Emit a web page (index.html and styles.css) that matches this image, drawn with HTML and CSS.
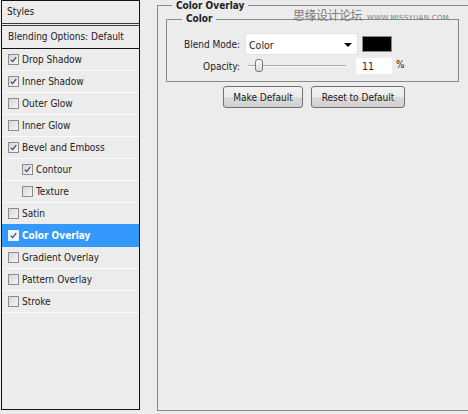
FILE: index.html
```html
<!DOCTYPE html>
<html lang="en">
<head>
    <meta charset="UTF-8">
    <title>Layer Style - Color Overlay</title>
    <link rel="stylesheet" href="styles.css">
</head>
<body>
    <div class="styles-panel">
        <div class="panel-title">Styles</div>
        <div class="panel-blending">Blending Options: Default</div>
        <ul class="style-list">
            <li><span class="check on"><svg viewBox="0 0 11 11"><path d="M2.2 5.6 L4.4 8 L8.8 2.6"/></svg></span>Drop Shadow</li>
            <li><span class="check on"><svg viewBox="0 0 11 11"><path d="M2.2 5.6 L4.4 8 L8.8 2.6"/></svg></span>Inner Shadow</li>
            <li><span class="check"></span>Outer Glow</li>
            <li><span class="check"></span>Inner Glow</li>
            <li><span class="check on"><svg viewBox="0 0 11 11"><path d="M2.2 5.6 L4.4 8 L8.8 2.6"/></svg></span>Bevel and Emboss</li>
            <li class="sub"><span class="check on"><svg viewBox="0 0 11 11"><path d="M2.2 5.6 L4.4 8 L8.8 2.6"/></svg></span>Contour</li>
            <li class="sub"><span class="check"></span>Texture</li>
            <li><span class="check"></span>Satin</li>
            <li class="active"><span class="check on"><svg viewBox="0 0 11 11"><path d="M2.2 5.6 L4.4 8 L8.8 2.6"/></svg></span>Color Overlay</li>
            <li><span class="check"></span>Gradient Overlay</li>
            <li><span class="check"></span>Pattern Overlay</li>
            <li><span class="check"></span>Stroke</li>
        </ul>
    </div>

    <fieldset class="overlay-group">
        <legend>Color Overlay</legend>
        <fieldset class="color-group">
            <legend>Color</legend>
            <div class="form-row">
                <label class="row-label">Blend Mode:</label>
                <div class="select-box">Color<span class="arrow"></span></div>
                <span class="swatch"></span>
            </div>
            <div class="form-row opacity-row">
                <label class="row-label">Opacity:</label>
                <div class="slider"><span class="thumb"></span></div>
                <div class="num-input">11</div>
                <span class="unit">%</span>
            </div>
        </fieldset>
        <div class="button-row">
            <button>Make Default</button>
            <button class="wide">Reset to Default</button>
        </div>
    </fieldset>

    <div class="watermark">思缘设计论坛<span>www.MISSYUAN.COM</span></div>
</body>
</html>
```

FILE: styles.css
```css
body {
    margin: 0;
    background-color: #ececec;
    font-family: "DejaVu Sans Condensed", "DejaVu Sans", sans-serif;
    font-size: 10px;
    color: #222;
    display: flex;
    align-items: flex-start;
    overflow: hidden;
    height: 414px;
}
.styles-panel {
    box-sizing: border-box;
    width: 139px;
    height: 410px;
    margin-left: 1px;
    border: 1px solid #141414;
    flex-shrink: 0;
}
.panel-title {
    height: 22px;
    line-height: 22px;
    padding-left: 5px;
    border-bottom: 3px double #3a3a3a;
}
.panel-blending {
    height: 22px;
    line-height: 22px;
    padding-left: 6px;
    border-bottom: 1px solid #141414;
}
.style-list {
    list-style: none;
    margin: 0;
    padding: 0;
}
.style-list li {
    display: flex;
    align-items: center;
    height: 21px;
    padding-left: 6px;
    border-bottom: 1px solid #fafafa;
}
.style-list li.sub {
    padding-left: 20px;
}
.style-list li.active {
    background-color: #3399fd;
    color: #fff;
    font-weight: bold;
    border-bottom-color: #3399fd;
    margin-top: -1px;
    height: 22px;
}
.check {
    box-sizing: border-box;
    width: 11px;
    height: 11px;
    margin-right: 3px;
    border: 1px solid #8c8c8c;
    background: linear-gradient(135deg, #d6d6d6, #f6f6f6);
    display: flex;
}
.check svg {
    width: 9px;
    height: 9px;
}
.check path {
    fill: none;
    stroke: #2f4577;
    stroke-width: 1.5;
}
.active .check {
    border-color: #e8eefa;
    background: #f4f6fb;
}

.overlay-group {
    box-sizing: border-box;
    margin: 0 0 0 17px;
    padding: 0;
    width: 330px;
    height: 411px;
    border: 1px solid #8a8a8a;
    flex-shrink: 0;
}
.overlay-group > legend {
    margin-left: 14px;
    padding: 0 4px;
    font-weight: bold;
    line-height: 11px;
}
.color-group {
    box-sizing: border-box;
    margin: 2px 0 0 8px;
    padding: 0;
    width: 293px;
    height: 69px;
    border: 1px solid #8a8a8a;
}
.color-group > legend {
    margin-left: 15px;
    padding: 0 4px;
    font-weight: bold;
    line-height: 12px;
}
.form-row {
    display: flex;
    align-items: center;
    margin-top: 8px;
}
.opacity-row {
    margin-top: 3px;
    height: 16px;
}
.row-label {
    width: 73px;
    text-align: right;
}
.select-box {
    box-sizing: border-box;
    position: relative;
    width: 113px;
    height: 22px;
    line-height: 22px;
    margin-left: 5px;
    padding-left: 3px;
    background-color: #fff;
    border: 1px solid #e2e2e2;
    font-size: 10.5px;
}
.arrow {
    position: absolute;
    right: 5px;
    top: 9px;
    border-left: 4px solid transparent;
    border-right: 4px solid transparent;
    border-top: 4px solid #000;
}
.swatch {
    box-sizing: border-box;
    width: 30px;
    height: 16px;
    margin-left: 4px;
    background-color: #000;
    border: 1px solid #8a8a8a;
}
.slider {
    position: relative;
    width: 98px;
    height: 16px;
    margin-left: 8px;
}
.slider::before {
    content: "";
    position: absolute;
    left: 0;
    right: 0;
    top: 7px;
    border-top: 1px solid #a8a8a8;
    border-bottom: 1px solid #fbfbfb;
}
.thumb {
    position: absolute;
    left: 7px;
    top: 1px;
    box-sizing: border-box;
    width: 8px;
    height: 13px;
    border: 1px solid #777;
    border-radius: 3px;
    background: linear-gradient(#fbfbfb, #d8d8d8);
}
.num-input {
    box-sizing: border-box;
    width: 36px;
    height: 16px;
    line-height: 16px;
    margin-left: 10px;
    padding-left: 6px;
    background-color: #fff;
    font-size: 10.5px;
}
.unit {
    margin-left: 4px;
    margin-top: -4px;
}
.button-row {
    display: flex;
    gap: 8px;
    margin: 4px 0 0 65px;
}
.button-row button {
    box-sizing: border-box;
    width: 80px;
    height: 22px;
    padding: 0;
    font-family: inherit;
    font-size: 10px;
    color: #222;
    border: 1px solid #707070;
    border-radius: 3px;
    background: linear-gradient(#f3f3f3 0%, #ebebeb 48%, #dbdbdb 52%, #d0d0d0 100%);
}
.button-row button.wide {
    width: 94px;
}
.watermark {
    position: absolute;
    left: 293px;
    top: 8px;
    color: #7a7a7a;
    font-family: "Noto Sans CJK SC", sans-serif;
    font-size: 12px;
    line-height: 14px;
    letter-spacing: -0.5px;
}
.watermark span {
    font-family: "DejaVu Sans", sans-serif;
    font-size: 7px;
    letter-spacing: 0.3px;
    margin-left: 5px;
    text-transform: uppercase;
}
```
